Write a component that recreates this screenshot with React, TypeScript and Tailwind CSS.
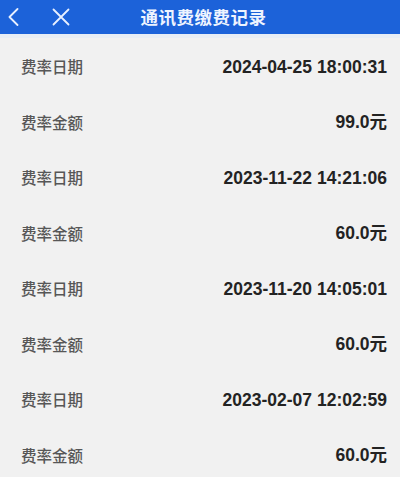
export default function App() {
  const records = [
    { date: "2024-04-25 18:00:31", amount: "99.0元" },
    { date: "2023-11-22 14:21:06", amount: "60.0元" },
    { date: "2023-11-20 14:05:01", amount: "60.0元" },
    { date: "2023-02-07 12:02:59", amount: "60.0元" },
  ];

  const rows = records.flatMap((r) => [
    { label: "费率日期", value: r.date },
    { label: "费率金额", value: r.amount },
  ]);

  return (
    <div className="w-[400px] h-[477px] overflow-hidden bg-[#f1f1f1] font-['Noto_Sans_CJK_SC',sans-serif]">
      {/* Header */}
      <div className="relative h-[34px] bg-[#1c62d9] flex items-center justify-center">
        <div className="absolute left-[8px] top-[8px] flex items-center gap-[33px]">
          <svg width="11" height="18" viewBox="0 0 11 18" fill="none">
            <path d="M9.5 1 L1.5 9 L9.5 17" stroke="#e8f0ff" strokeWidth="1.8" strokeLinecap="round" strokeLinejoin="round" />
          </svg>
          <svg width="18" height="18" viewBox="0 0 18 18" fill="none">
            <path d="M1.5 1.5 L16.5 16.5 M16.5 1.5 L1.5 16.5" stroke="#e8f0ff" strokeWidth="1.8" strokeLinecap="round" />
          </svg>
        </div>
        <span className="pl-[7px] text-[17.5px] font-semibold tracking-[0.5px] text-[#eef4ff]">通讯费缴费记录</span>
      </div>
      <div className="h-[4px] bg-[#e7edf5]" />

      {/* Records */}
      <div className="pt-px">
        {rows.map((row, i) => (
          <div key={i} className="h-[55.5px] flex items-center justify-between pl-[21px] pr-[13px]">
            <span className="text-[15.5px] font-medium text-[#575757]">{row.label}</span>
            <span className="text-[17.5px] font-bold text-[#232323] font-['Liberation_Sans','Noto_Sans_CJK_SC',sans-serif]">
              {row.value}
            </span>
          </div>
        ))}
      </div>
    </div>
  );
}
